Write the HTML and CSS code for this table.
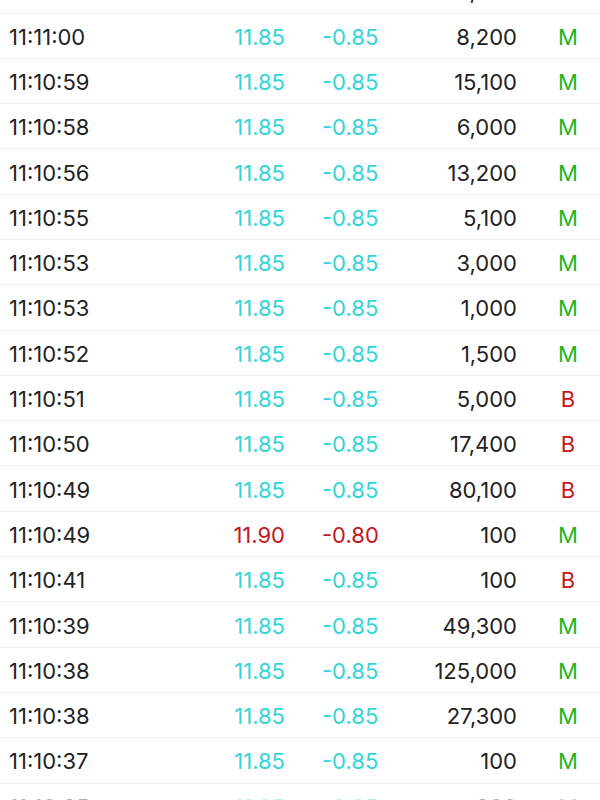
FILE: index.html
```html
<!DOCTYPE html>
<html>
<head>
<meta charset="utf-8">
<link rel="stylesheet" href="styles.css">
</head>
<body>
<div class="list">
  <div class="row"><span class="time">11:11:01</span><span class="price up">11.85</span><span class="chg up">-0.85</span><span class="vol">1,000</span><span class="flag m">M</span></div>
  <div class="row"><span class="time">11:11:00</span><span class="price up">11.85</span><span class="chg up">-0.85</span><span class="vol">8,200</span><span class="flag m">M</span></div>
  <div class="row"><span class="time">11:10:59</span><span class="price up">11.85</span><span class="chg up">-0.85</span><span class="vol">15,100</span><span class="flag m">M</span></div>
  <div class="row"><span class="time">11:10:58</span><span class="price up">11.85</span><span class="chg up">-0.85</span><span class="vol">6,000</span><span class="flag m">M</span></div>
  <div class="row"><span class="time">11:10:56</span><span class="price up">11.85</span><span class="chg up">-0.85</span><span class="vol">13,200</span><span class="flag m">M</span></div>
  <div class="row"><span class="time">11:10:55</span><span class="price up">11.85</span><span class="chg up">-0.85</span><span class="vol">5,100</span><span class="flag m">M</span></div>
  <div class="row"><span class="time">11:10:53</span><span class="price up">11.85</span><span class="chg up">-0.85</span><span class="vol">3,000</span><span class="flag m">M</span></div>
  <div class="row"><span class="time">11:10:53</span><span class="price up">11.85</span><span class="chg up">-0.85</span><span class="vol">1,000</span><span class="flag m">M</span></div>
  <div class="row"><span class="time">11:10:52</span><span class="price up">11.85</span><span class="chg up">-0.85</span><span class="vol">1,500</span><span class="flag m">M</span></div>
  <div class="row"><span class="time">11:10:51</span><span class="price up">11.85</span><span class="chg up">-0.85</span><span class="vol">5,000</span><span class="flag b">B</span></div>
  <div class="row"><span class="time">11:10:50</span><span class="price up">11.85</span><span class="chg up">-0.85</span><span class="vol">17,400</span><span class="flag b">B</span></div>
  <div class="row"><span class="time">11:10:49</span><span class="price up">11.85</span><span class="chg up">-0.85</span><span class="vol">80,100</span><span class="flag b">B</span></div>
  <div class="row"><span class="time">11:10:49</span><span class="price dn">11.90</span><span class="chg dn">-0.80</span><span class="vol">100</span><span class="flag m">M</span></div>
  <div class="row"><span class="time">11:10:41</span><span class="price up">11.85</span><span class="chg up">-0.85</span><span class="vol">100</span><span class="flag b">B</span></div>
  <div class="row"><span class="time">11:10:39</span><span class="price up">11.85</span><span class="chg up">-0.85</span><span class="vol">49,300</span><span class="flag m">M</span></div>
  <div class="row"><span class="time">11:10:38</span><span class="price up">11.85</span><span class="chg up">-0.85</span><span class="vol">125,000</span><span class="flag m">M</span></div>
  <div class="row"><span class="time">11:10:38</span><span class="price up">11.85</span><span class="chg up">-0.85</span><span class="vol">27,300</span><span class="flag m">M</span></div>
  <div class="row"><span class="time">11:10:37</span><span class="price up">11.85</span><span class="chg up">-0.85</span><span class="vol">100</span><span class="flag m">M</span></div>
  <div class="row faded"><span class="time">11:10:35</span><span class="price up">11.85</span><span class="chg up">-0.85</span><span class="vol">200</span><span class="flag m">M</span></div>
</div>
</body>
</html>
```
FILE: styles.css
```css
html, body {
  margin: 0;
  padding: 0;
  background: #ffffff;
  overflow: hidden;
}
body {
  font-family: Inter, "Noto Sans", sans-serif;
  font-size: 22px;
  color: #222222;
}
.list {
  margin-top: -31.81px;
}
.row {
  box-sizing: border-box;
  height: 45.31px;
  border-bottom: 1px solid #f0f0f0;
  display: grid;
  grid-template-columns: 176px 100px 118px 114px 1fr;
  align-items: center;
  padding-left: 9px;
  padding-top: 2px;
}
.price { text-align: right; }
.chg { padding-left: 37px; }
.vol { text-align: right; }
.flag { text-align: center; padding-left: 23px; padding-right: 4px; }
.up { color: #33d5d8; }
.dn { color: #c4161c; }
.m { color: #1fb41f; }
.b { color: #c4161c; }
.faded { opacity: 0.35; }
```
